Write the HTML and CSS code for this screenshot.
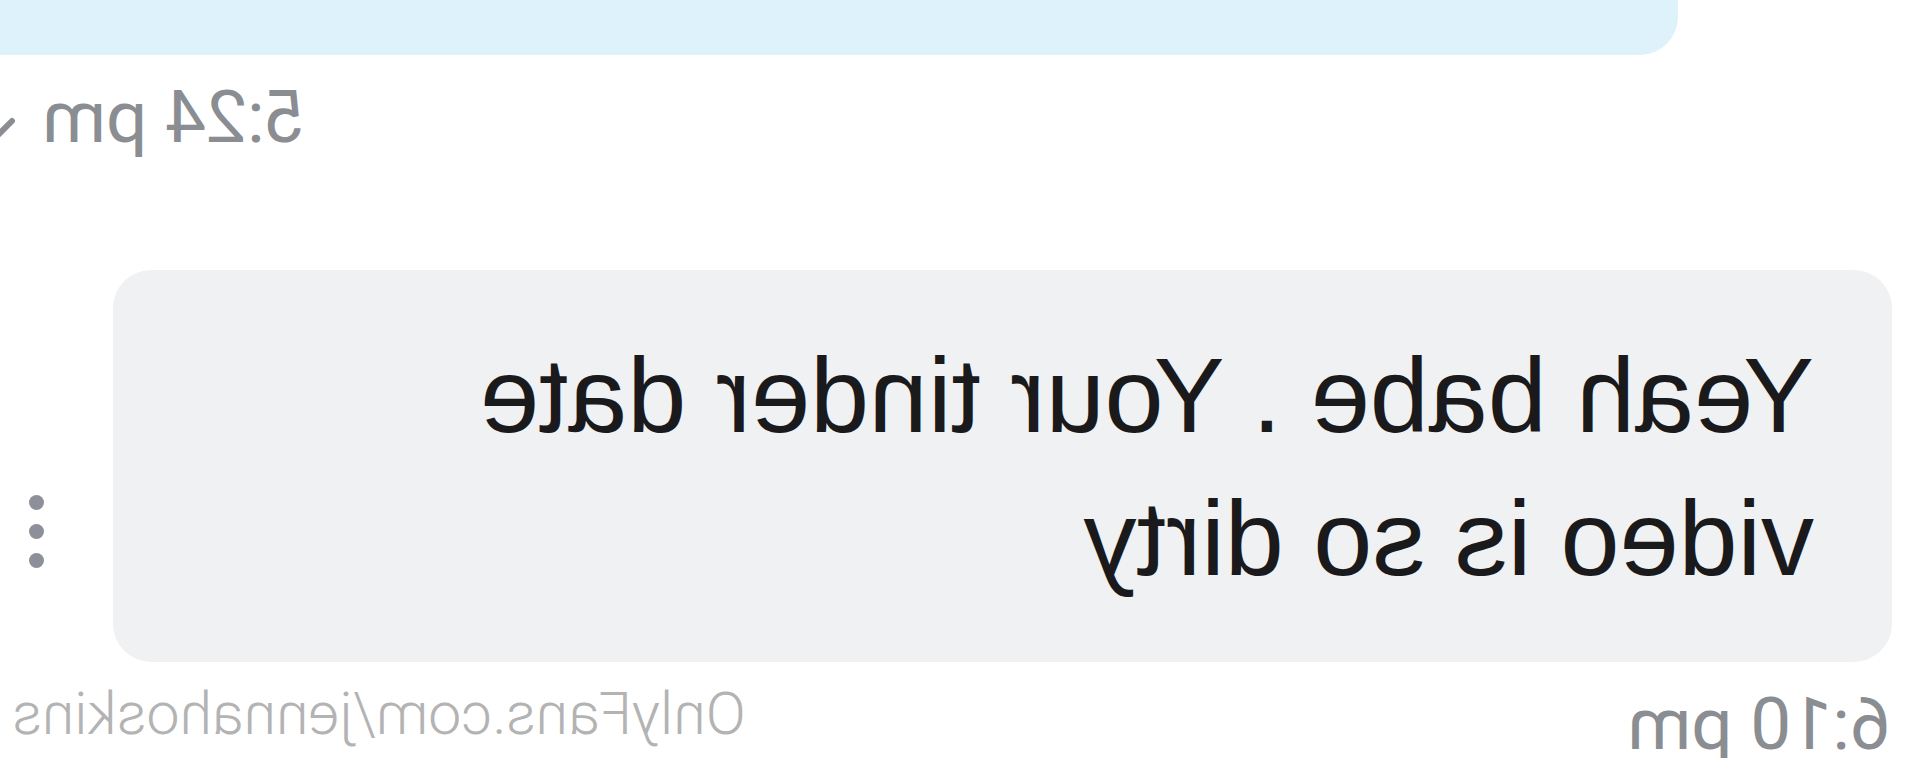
FILE: index.html
```html
<!DOCTYPE html>
<html lang="en">

<head>
  <meta charset="UTF-8" />
  <title>chat</title>
  <link rel="stylesheet" href="styles.css">
</head>

<body>
  <!-- 전체화면 (좌우반전) -->
  <main class="screen">
    <!-- 보낸 메시지 말풍선 -->
    <div class="bubble-sent"></div>

    <!-- 보낸시간 + 체크 -->
    <div class="meta-sent">
      <span class="time">5:24 pm</span>
      <svg class="check" width="44" height="40" viewBox="0 0 44 40">
        <path d="M4 6 L19 21 L44 -6" fill="none" stroke="#8a8d92" stroke-width="6" stroke-linecap="round" stroke-linejoin="round" />
      </svg>
    </div>

    <!-- 받은 메시지 -->
    <div class="row-recv">
      <div class="bubble-recv">
        <p>Yeah babe . Your tinder date video is so dirty</p>
      </div>
      <!-- 더보기 점3개 -->
      <div class="more">
        <i></i><i></i><i></i>
      </div>
    </div>

    <!-- 하단: 받은시간 + 워터마크 -->
    <div class="foot">
      <span class="time time-recv">6:10 pm</span>
      <span class="mark">OnlyFans.com/jennahoskins</span>
    </div>
  </main>
</body>

</html>
```

FILE: styles.css
```css
/* 초기화 */
html,
body,
p {
  margin: 0;
  padding: 0;
}

body {
  background-color: #fff;
  overflow: hidden;
}

/* 전체화면 - 좌우반전 */
.screen {
  width: 1919px;
  height: 758px;
  overflow: hidden;
  transform: scaleX(-1);
}

/* 보낸 말풍선 (윗부분만 보임) */
.bubble-sent {
  height: 55px;
  margin-left: 241px;
  background-color: #ddf2fb;
  border-radius: 0 0 0 38px;
}

/* 보낸시간 줄 */
.meta-sent {
  display: flex;
  justify-content: flex-end;
  align-items: flex-start;
  margin-top: 20px;
  margin-right: -28px;
}

/* 시간글자 공통 */
.time {
  font-family: Roboto, "Liberation Sans", sans-serif;
  font-size: 73px;
  line-height: 84px;
  color: #8a8d92;
}

.check {
  margin-top: 40px;
  margin-left: 26px;
}

/* 받은메시지 줄 */
.row-recv {
  display: flex;
  margin-top: 111px;
}

/* 받은 말풍선 */
.bubble-recv {
  width: 1779px;
  margin-left: 27px;
  padding: 54px 0 52px 78px;
  box-sizing: border-box;
  background-color: #f0f1f3;
  border-radius: 38px;
}

.bubble-recv p {
  max-width: 1450px;
  font-family: "Liberation Sans", Arial, sans-serif;
  font-size: 106px;
  line-height: 143px;
  color: #1a1a1c;
}

/* 점3개 */
.more {
  display: flex;
  flex-direction: column;
  gap: 14px;
  margin-left: 69px;
  margin-top: 225px;
}

.more i {
  display: block;
  width: 15px;
  height: 15px;
  border-radius: 50%;
  background-color: #8e9099;
}

/* 하단줄 */
.foot {
  display: flex;
  justify-content: space-between;
  align-items: flex-start;
  margin-top: 10px;
  padding: 0 12px 0 28px;
}

.time-recv {
  margin-top: 10px;
}

/* 워터마크 */
.mark {
  font-family: Roboto, "Liberation Sans", sans-serif;
  font-weight: 300;
  font-size: 59px;
  line-height: 84px;
  color: #b3b3b3;
}
```
